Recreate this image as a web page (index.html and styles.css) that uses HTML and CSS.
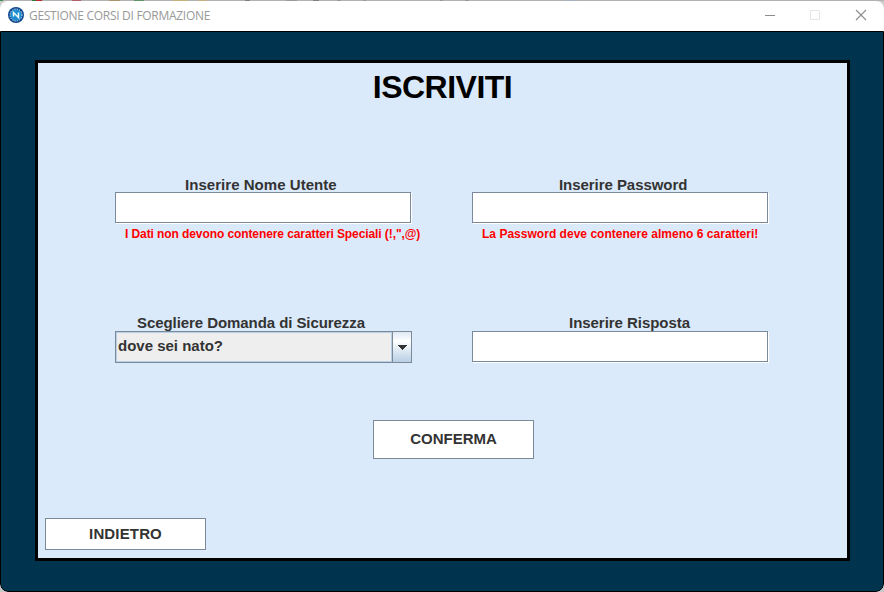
FILE: index.html
```
<!DOCTYPE html>
<html lang="it">
<head>
<meta charset="utf-8">
<title>GESTIONE CORSI DI FORMAZIONE</title>
<link rel="stylesheet" href="styles.css">
</head>
<body>
<div class="desktop">
<div class="window">
  <header class="titlebar">
    <svg class="logo" width="16" height="16" viewBox="0 0 16 16">
      <circle cx="8" cy="8" r="8" fill="#10488f"/>
      <circle cx="8" cy="8" r="5.800" fill="#1d8fd0"/>
      <circle cx="8" cy="8" r="6" fill="none" stroke="#e5f2fa" stroke-width="1" stroke-dasharray="1.200 1.156"/>
      <path d="M5.500 9.500V5.500L10.500 10.500V5.500" fill="none" stroke="#f2f9fd" stroke-width="1.500"/>
    </svg>
    <span class="caption">GESTIONE CORSI DI FORMAZIONE</span>
    <svg class="controls" width="104" height="12" viewBox="0 0 104 12">
      <path d="M1 6.5H11" stroke="#8c8c8c"/>
      <rect x="46.500" y="1.500" width="9" height="9" rx=".5" fill="none" stroke="#e6e6e6"/>
      <path d="M92 1L102 11M102 1L92 11" stroke="#8c8c8c" stroke-width="1.100"/>
    </svg>
  </header>
  <main class="content">
    <section class="panel">
      <h1 class="title">ISCRIVITI</h1>
      <form class="form">
        <div class="field">
          <label class="label user">Inserire Nome Utente</label>
          <div class="input"></div>
          <p class="hint chars">I Dati non devono contenere caratteri Speciali (!,",@)</p>
        </div>
        <div class="field">
          <label class="label pass">Inserire Password</label>
          <div class="input"></div>
          <p class="hint length">La Password deve contenere almeno 6 caratteri!</p>
        </div>
        <div class="field">
          <label class="label question">Scegliere Domanda di Sicurezza</label>
          <div class="select">
            <span class="value">dove sei nato?</span>
            <span class="arrow"><svg width="10" height="5" viewBox="0 0 10 5" shape-rendering="crispEdges"><path d="M0 0H10L5 5Z" fill="#333"/></svg></span>
          </div>
        </div>
        <div class="field">
          <label class="label answer">Inserire Risposta</label>
          <div class="input"></div>
        </div>
      </form>
      <button class="button confirm">CONFERMA</button>
      <button class="button back">INDIETRO</button>
    </section>
  </main>
</div>
</div>
</body>
</html>
```
FILE: styles.css
```
* { box-sizing: border-box; }
body { margin: 0; font-family: "Liberation Sans", sans-serif; }
.desktop {
  height: 592px;
  padding-top: 1px;
  background:
    linear-gradient(90deg,
      #3f8f52 3px, #b2b2b2 3px 32px, #2f7a3a 32px 36px, #c22a2a 36px 42px,
      #b2b2b2 42px 72px, #b06068 72px 81px, #b2b2b2 81px 109px, #a89468 109px 120px,
      #b2b2b2 120px 134px, #5c9468 134px 144px, #b2b2b2 144px 173px, #c4b07c 173px 188px,
      #b2b2b2 188px 198px, #c4b07c 198px 207px, #b2b2b2 207px 245px, #808080 245px 250px,
      #b2b2b2 250px 286px, #999 286px 297px, #b2b2b2 297px 313px, #808080 313px 319px,
      #b2b2b2 319px 337px, #999 337px 341px, #b2b2b2 341px 363px, #999 363px 366px,
      #b2b2b2 366px 440px, #999 440px 443px, #b2b2b2 443px 465px, #999 465px 469px,
      #b2b2b2 469px 565px, #a4b2bf 565px 578px, #b2b2b2 578px) 0 0 / 100% 1px no-repeat,
    linear-gradient(#cfcfcf, #c8c8c8);
  overflow: hidden;
}
.window {
  height: 591px;
  border-radius: 8px;
  overflow: hidden;
  display: flex;
  flex-direction: column;
  background: #fff;
}
.titlebar {
  height: 30px;
  padding: 0 16px 0 8px;
  display: flex;
  align-items: center;
  flex: none;
}
.logo { margin-right: 5px; margin-bottom: 2px; }
.caption {
  font-family: "Open Sans", sans-serif;
  font-size: 12px;
  letter-spacing: -0.29px;
  color: #999;
  flex: 1;
  white-space: nowrap;
  margin-bottom: 2px;
}
.controls { margin-bottom: 2px; }
.content {
  flex: 1;
  background: #00334e;
  border: 1px solid #000;
  border-radius: 0 0 8px 8px;
  padding: 28px 33px 30px 34px;
}
.panel {
  width: 815px;
  height: 501px;
  border: 3px solid #000;
  background: #dbeafa;
  display: flex;
  flex-direction: column;
}
.title {
  margin: 6px 0 0;
  height: 36px;
  line-height: 37px;
  font-size: 32px;
  letter-spacing: -0.5px;
  text-align: center;
  color: #000;
}
.form {
  margin: 71px 0 0 77px;
  display: grid;
  grid-template-columns: 297px 297px;
  grid-template-rows: 139px 48px;
  column-gap: 60px;
}
.label {
  display: block;
  height: 16px;
  line-height: 17px;
  font-size: 15px;
  font-weight: bold;
  color: #333;
  white-space: nowrap;
}
.user { padding-left: 70px; letter-spacing: 0.04px; }
.pass { padding-left: 87px; letter-spacing: -0.05px; }
.question { padding-left: 22px; line-height: 15px; letter-spacing: -0.07px; }
.answer { padding-left: 97px; line-height: 15px; letter-spacing: -0.04px; }
.input {
  width: 296px;
  height: 31px;
  background: #fff;
  border: 1px solid #7a8a99;
  box-shadow: 1px 1px 0 #fff;
}
.hint {
  margin: 4px 0 0 10px;
  line-height: 14px;
  font-size: 12px;
  font-weight: bold;
  color: #f00;
  white-space: nowrap;
}
.chars { letter-spacing: -0.09px; }
.length { letter-spacing: 0.02px; }
.select {
  width: 297px;
  height: 32px;
  border: 1px solid #7a8a99;
  display: flex;
}
.value {
  flex: 1;
  background: #eee;
  border: 1px solid #b8cfe5;
  padding-left: 1px;
  line-height: 25px;
  font-size: 15px;
  font-weight: bold;
  color: #333;
}
.arrow {
  width: 19px;
  border-left: 1px solid #7a8a99;
  background: linear-gradient(#dde8f3, #fff 30%, #b8cfe5);
  display: flex;
  align-items: center;
  justify-content: center;
  padding-top: 1px;
}
.button {
  width: 161px;
  padding: 0 0 2px;
  background: #fff;
  border: 1px solid #7a8a99;
  border-radius: 0;
  font: bold 15px "Liberation Sans", sans-serif;
  color: #333;
}
.confirm { height: 39px; margin: 57px 0 0 335px; }
.back { height: 32px; margin: 59px 0 0 7px; letter-spacing: 0.15px; }
```
